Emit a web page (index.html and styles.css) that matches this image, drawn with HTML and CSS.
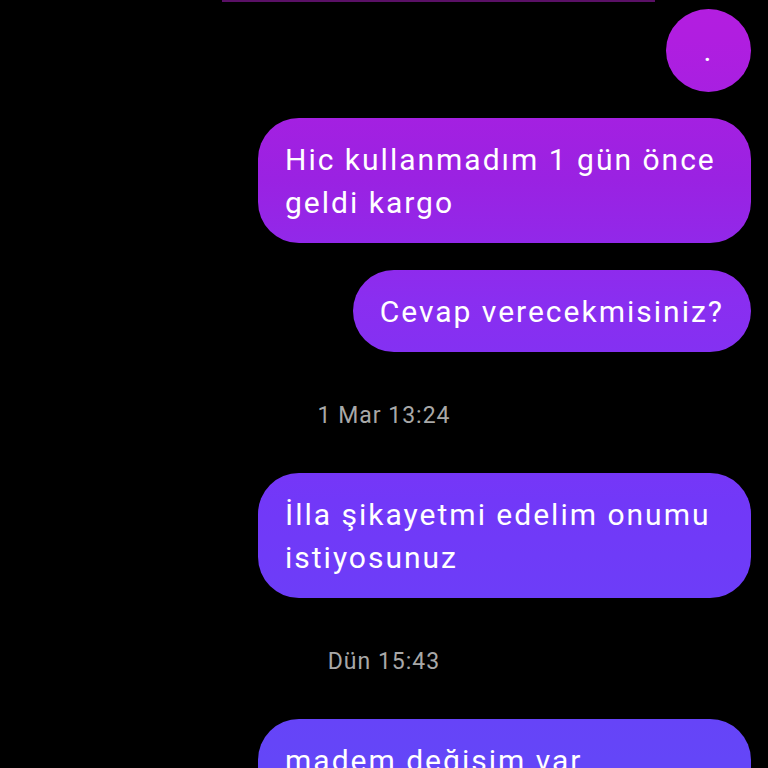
FILE: index.html
```html
<!DOCTYPE html>
<html lang="tr">
<head>
<meta charset="utf-8">
<title>Mesajlar</title>
<link rel="stylesheet" href="styles.css">
</head>
<body>
    <div class="top-edge"></div>
    <div class="chat">
        <div class="msg out dot">.</div>
        <div class="msg out">Hic kullanmadım 1 gün önce geldi kargo</div>
        <div class="msg out">Cevap verecekmisiniz?</div>
        <div class="stamp">1 Mar 13:24</div>
        <div class="msg out">İlla şikayetmi edelim onumu istiyosunuz</div>
        <div class="stamp">Dün 15:43</div>
        <div class="msg out">madem değişim var değiştirin</div>
    </div>
</body>
</html>
```

FILE: styles.css
```css
body {
    margin: 0;
    background-color: #000;
    font-family: Roboto, "Noto Sans", sans-serif;
    overflow: hidden;
}

.top-edge {
    height: 2px;
    margin: 0 113px 0 222px;
    background-color: #5a1066;
}

.chat {
    display: flex;
    flex-direction: column;
    align-items: flex-end;
    padding: 7px 17px 0 0;
}

.msg {
    max-width: 493px;
    box-sizing: border-box;
    padding: 20px 27px 19px 27px;
    border-radius: 41px;
    color: #fff;
    font-size: 30px;
    letter-spacing: 2px;
    line-height: 43px;
    margin-bottom: 27px;
    /* renk gradyani ekrana sabit */
    background: linear-gradient(180deg, #b41ee0 0px, #b01ee0 40px, #9a22e2 180px, #8a2ef0 300px, #7238f8 500px, #6446f8 760px);
    background-attachment: fixed;
}

.msg.dot {
    width: 85px;
    height: 83px;
    padding: 0;
    border-radius: 50%;
    text-align: center;
    line-height: 83px;
    margin-bottom: 26px;
}

.stamp {
    align-self: center;
    margin: 22px 0 42px 17px;
    color: #a8a8a8;
    font-size: 23px;
    letter-spacing: 1px;
    line-height: 30px;
}
```
